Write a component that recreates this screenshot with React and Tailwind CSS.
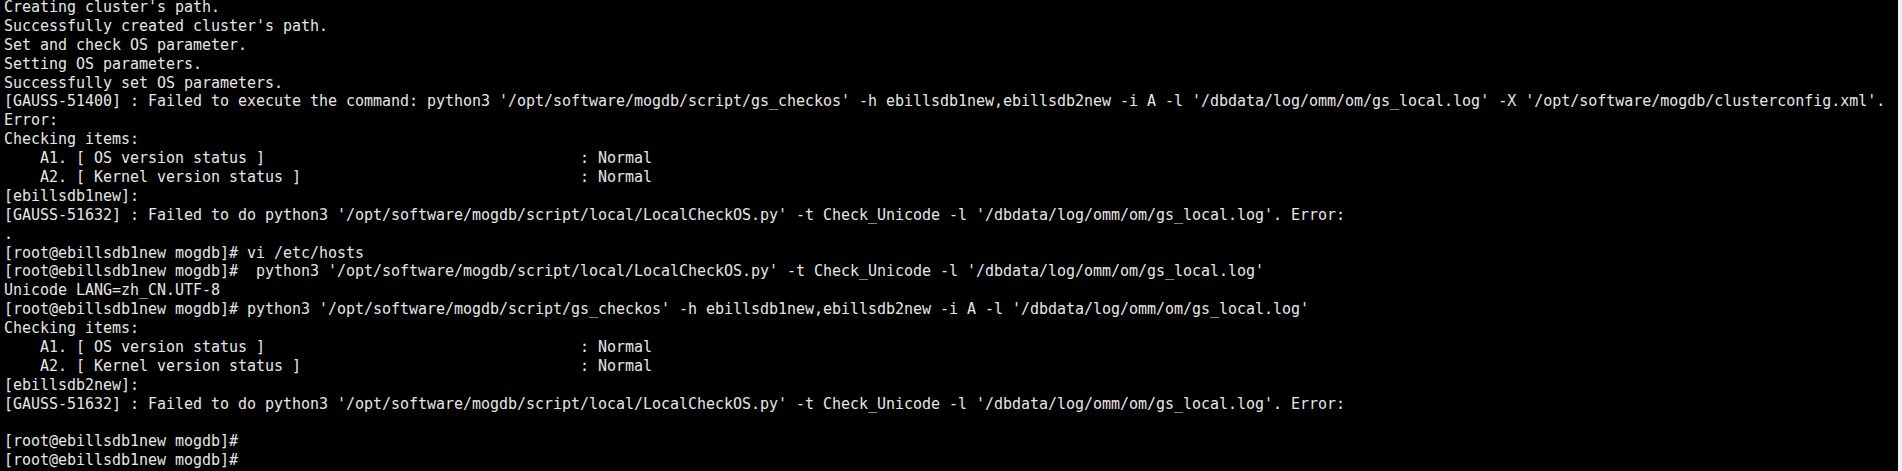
const pad = (s) => s.padEnd(64, ' ');

const lines = [
  "Creating cluster's path.",
  "Successfully created cluster's path.",
  'Set and check OS parameter.',
  'Setting OS parameters.',
  'Successfully set OS parameters.',
  "[GAUSS-51400] : Failed to execute the command: python3 '/opt/software/mogdb/script/gs_checkos' -h ebillsdb1new,ebillsdb2new -i A -l '/dbdata/log/omm/om/gs_local.log' -X '/opt/software/mogdb/clusterconfig.xml'.",
  'Error:',
  'Checking items:',
  pad('    A1. [ OS version status ]') + ': Normal',
  pad('    A2. [ Kernel version status ]') + ': Normal',
  '[ebillsdb1new]:',
  "[GAUSS-51632] : Failed to do python3 '/opt/software/mogdb/script/local/LocalCheckOS.py' -t Check_Unicode -l '/dbdata/log/omm/om/gs_local.log'. Error:",
  '.',
  '[root@ebillsdb1new mogdb]# vi /etc/hosts',
  "[root@ebillsdb1new mogdb]#  python3 '/opt/software/mogdb/script/local/LocalCheckOS.py' -t Check_Unicode -l '/dbdata/log/omm/om/gs_local.log'",
  'Unicode LANG=zh_CN.UTF-8',
  "[root@ebillsdb1new mogdb]# python3 '/opt/software/mogdb/script/gs_checkos' -h ebillsdb1new,ebillsdb2new -i A -l '/dbdata/log/omm/om/gs_local.log'",
  'Checking items:',
  pad('    A1. [ OS version status ]') + ': Normal',
  pad('    A2. [ Kernel version status ]') + ': Normal',
  '[ebillsdb2new]:',
  "[GAUSS-51632] : Failed to do python3 '/opt/software/mogdb/script/local/LocalCheckOS.py' -t Check_Unicode -l '/dbdata/log/omm/om/gs_local.log'. Error:",
  '',
  '[root@ebillsdb1new mogdb]#',
  '[root@ebillsdb1new mogdb]#',
];

export default function App() {
  return (
    <div className="flex h-[471px] w-[1902px] overflow-hidden bg-black">
      <div className="flex-1 overflow-hidden pl-[4px]">
        <div className="-mt-[2px] font-['DejaVu_Sans_Mono',monospace] text-[15px] leading-[18.9px] tracking-[-0.03px] text-[#e6e6e6]">
          {lines.map((line, i) => (
            <div key={i} className="h-[18.9px] whitespace-pre">
              {line}
            </div>
          ))}
        </div>
      </div>
      <div className="w-[4px] bg-[#f0f0f0]" />
    </div>
  );
}
